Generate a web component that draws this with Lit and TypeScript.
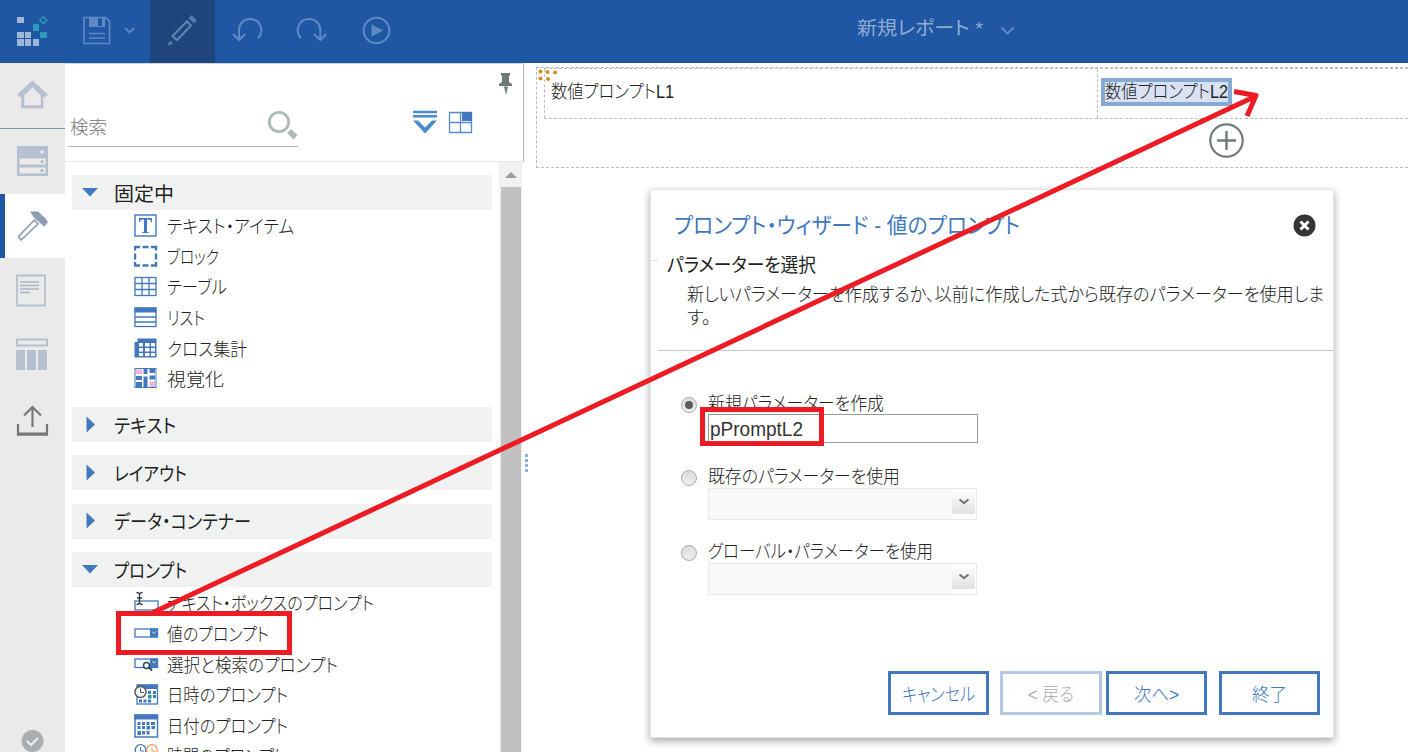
import { LitElement, html, css, svg, nothing } from "lit";
import { customElement, property } from "lit/decorators.js";

/** A single line of text condensed or expanded to fill a given width. */
@customElement("fit-text")
class FitText extends LitElement {
  @property() text = "";
  @property({ type: Number }) w = 100;
  static styles = css`
    :host { display: block; flex: none; white-space: pre; }
    .run { display: inline-block; transform-origin: 0 50%; }
  `;
  firstUpdated() {
    const run = this.renderRoot.querySelector(".run") as HTMLElement;
    this.style.width = `${this.w}px`;
    run.style.transform = `scaleX(${this.w / run.getBoundingClientRect().width})`;
  }
  render() {
    return html`<span class="run">${this.text}</span>`;
  }
}

const B = "#4178be";

const itemIcons: Record<string, unknown> = {
  text: svg`<rect x="1" y="1" width="21" height="21" fill="#fff" stroke=${B} stroke-width="1.4"/><path d="M5 4h13v4h-1c0-2-1-2.600-3-2.600h-1v11.600c0 1 .6 1.200 2 1.300v.7H8v-.7c1.400-.1 2-.3 2-1.300V5.400H9C7 5.400 6 6 6 8H5z" fill=${B}/>`,
  block: svg`<path d="M1 6V2.500h5M8.500 2.500h6M17 2.500h5V6M22 9v6M22 17.500V21h-5M14.500 21h-6M6 21H1v-3.500M1 15V9" transform="translate(0 -.5)" fill="none" stroke=${B} stroke-width="2.400"/>`,
  table: svg`<rect x="1" y="2.500" width="21" height="18" fill="none" stroke=${B} stroke-width="1.300"/><path d="M8 2v19M15 2v19M1 8.500h21M1 14.500h21" stroke=${B} stroke-width="1.300"/>`,
  list: svg`<rect x="1" y="2" width="21" height="18.500" fill="none" stroke=${B} stroke-width="1.300"/><path d="M.5 1.500h22v5H.5z" fill=${B}/><path d="M1 11h21M1 16h21" stroke=${B} stroke-width="1.300"/>`,
  cross: svg`<path d="M3.500 1.500h19V20.500H.5V5h3z" fill=${B}/><path d="M5 6h4v3.500H5zM11 6h4.500v3.500H11zM17 6h4v3.500h-4zM5 11h4v3.500H5zM11 11h4.500v3.500H11zM17 11h4v3.500h-4zM5 16h4v3H5zM11 16h4.500v3H11zM17 16h4v3h-4z" fill="#fff"/>`,
  visual: svg`<rect x="1" y="1.500" width="21" height="19" fill="#fff" stroke=${B}/><path d="M2 9h6v4H2zM2 15h6v5H2zM9.500 2h4v5h-4zM9.500 9.500h4V20h-4zM15.500 2H21v4h-5.500zM15.500 8.500H21v4h-5.500z" fill=${B}/><path d="M2 2.500h6v4.500H2zM15.500 14.500H21V20h-5.500z" fill="#eeb4d6"/>`,
  textbox: svg`<rect x="1" y="10" width="23" height="9" fill="#fff" stroke=${B} stroke-width="1.300"/><path d="M2.500 1.500c1.500 0 2.500.5 3 1.500.5-1 1.500-1.500 3-1.500M5.500 3v9M3 7h5M2.500 13.500c1.500 0 2.500-.5 3-1.500.5 1 1.500 1.500 3 1.500" fill="none" stroke="#333" stroke-width="1.300"/>`,
  value: svg`<rect x="1" y="7" width="22.500" height="8" fill="#fff" stroke=${B} stroke-width="1.300"/><path d="M16 6.500h8v9h-8z" fill=${B}/><path d="m18 9.500 2 2 2-2" fill="none" stroke="#cfe0f5"/>`,
  search: svg`<rect x="1" y="6" width="22.500" height="8.500" fill="#fff" stroke=${B} stroke-width="1.300"/><path d="M16 5.500h8v9h-8z" fill=${B}/><path d="m18 8 2 2 2-2" fill="none" stroke="#cfe0f5"/><circle cx="12.500" cy="12.500" r="3" fill="#fff" stroke="#264a60" stroke-width="1.500"/><path d="m15 14.500 3 3" stroke="#264a60" stroke-width="2"/>`,
  datetime: svg`<rect x="3" y="2" width="20.500" height="19" fill="#fff" stroke=${B} stroke-width="1.300"/><path d="M3 1.500h21V6H3z" fill=${B}/><path d="M14 8h3v3h-3zM19 8h3v3h-3zM19 12h3v3h-3zM5 16.500h3v3H5zM9.500 16.500h3v3h-3zM14 16.500h3v3h-3z" fill=${B}/><path d="M14 12h3.500v3.500H14z" fill="#12a58c"/><circle cx="6.500" cy="9" r="5.500" fill="#f4f4f4" stroke="#555" stroke-width="1.400"/><path d="M6.500 5.500V9.500H10" fill="none" stroke="#555"/>`,
  date: svg`<rect x="1" y="1" width="22.500" height="22" fill="#fff" stroke=${B} stroke-width="1.500"/><path d="M.5.500h23.500v5H.5z" fill=${B}/><path d="M8 8h3v3H8zM12.500 8h3v3h-3zM17 8h4v3h-4zM3.500 12h3v3h-3zM8 12h3v3H8zM12.500 12h3.500v3.500h-3.500zM17.500 12H21v3h-3.500zM3.500 17H7v4H3.500zM8 17h3v3.500H8zM12.500 17h3v3.500h-3z" fill=${B}/><path d="M3.500 8h3v3h-3z" fill=${B}/>`,
  time: svg`<circle cx="6.500" cy="6" r="5.300" fill="#fff" stroke=${B} stroke-width="1.300"/><path d="M6.500 3v4H10" fill="none" stroke=${B}/><circle cx="18" cy="6" r="5.300" fill="#fff" stroke="#ee9560" stroke-width="1.300"/><path d="M18 3v4h3.500" fill="none" stroke="#ee9560"/>`,
};

type Item = [icon: string, label: string, width: number];
const pinned: Item[] = [
  ["text", "テキスト・アイテム", 127],
  ["block", "ブロック", 52],
  ["table", "テーブル", 60],
  ["list", "リスト", 38],
  ["cross", "クロス集計", 80],
  ["visual", "視覚化", 57],
];
const prompts: Item[] = [
  ["textbox", "テキスト・ボックスのプロンプト", 207],
  ["value", "値のプロンプト", 102],
  ["search", "選択と検索のプロンプト", 171],
  ["datetime", "日時のプロンプト", 121],
  ["date", "日付のプロンプト", 121],
  ["time", "時間のプロンプト", 119],
];

@customElement("app-root")
class AppRoot extends LitElement {
  static styles = css`
    :host {
      display: block; position: relative; width: 1408px; height: 752px; overflow: hidden; background: #fff;
      font-family: "Liberation Sans", "Noto Sans CJK JP", sans-serif;
      font-size: 18.5px; font-weight: 300; line-height: 24px; color: #222;
      font-feature-settings: "palt";
    }
    * { box-sizing: border-box; }
    svg { display: block; flex: none; }
    .top { height: 63px; background: #1f57a4; display: flex; }
    .tools { width: 857px; flex: none; }
    .report { display: flex; align-items: center; gap: 17px; color: #8fabd1; font-size: 19px; font-weight: 400; padding-bottom: 5px; }
    .report svg { margin-top: 4px; }
    .main { display: flex; height: 689px; }
    .rail { width: 65px; flex: none; background: #eaeaea; display: flex; flex-direction: column; }
    .tab { height: 65px; flex: none; }
    .tab.home { height: 66px; border-bottom: 1px solid #8195b4; }
    .tab.on { height: 64px; background: #fff; border-left: 5px solid #1f57a4; }
    .tab.last { margin-top: auto; height: 32px; }
    .panel { width: 459px; flex: none; display: flex; flex-direction: column; border-top: 1px solid #d0d6de; }
    .head { height: 98px; flex: none; border-right: 1px solid #aeb8b8; border-bottom: 1px solid #e3e6e6; display: flex; align-items: flex-start; }
    .find { width: 230px; margin: 43px 0 0 3px; height: 40px; border-bottom: 1px solid #aeb8b8; display: flex; justify-content: space-between; padding: 1px 0 0 2px; color: #777; }
    .find fit-text { margin-top: 8px; }
    .find svg { margin-right: -1px; }
    .modes { margin: 46px 0 0 115px; }
    .pin { margin: 8px 0 0 23px; }
    .scroll { display: flex; flex: 1; min-height: 0; overflow: hidden; }
    .tree { width: 427px; margin-left: 7px; padding-top: 13px; flex: none; }
    .sec { width: 420px; height: 35px; background: #f0f2f1; display: flex; align-items: center; color: #222; font-weight: 400; font-size: 19px; margin-bottom: 13.400px; }
    .sec.open { margin-bottom: 0; }
    .sec svg { margin: 0 13px 0 9px; }
    .sec fit-text { padding-top: 4px; }
    .items { height: 197px; padding-top: 1px; }
    .item { height: 30.600px; display: flex; align-items: center; padding-left: 62px; gap: 8px; }
    .item fit-text { padding-top: 2px; }
    .bar { width: 23px; background: #f1f1f1; display: flex; flex-direction: column; align-items: center; }
    .bar svg { margin-top: 10px; }
    .thumb { width: 20px; flex: 1; margin-top: 9px; background: #c1c1c1; }
    .canvas { flex: 1; min-width: 0; padding: 4px 0 0 12px; }
    .page { height: 101px; border: 1px dashed #bbb; border-right: 0; }
    .grid { height: 51px; border-bottom: 1px dashed #bbb; border-top: 1px dashed #bbb; margin-left: 7px; display: flex; }
    .cell { width: 553px; border-left: 1px dashed #bbb; padding: 11px 0 0 6px; }
    .cell.b { flex: 1; padding: 9px 0 0 3px; }
    .picked { width: 131px; height: 28px; border: 4px solid #86a9d5; background: #d8e2f2; display: flex; align-items: center; justify-content: center; }
    .dialog { position: absolute; left: 650px; top: 189px; width: 684px; height: 549px; background: #fff; border: 1px solid #e5e5e5; box-shadow: 0 3px 8px rgba(0,0,0,.35); }
    .dhead { display: flex; justify-content: space-between; padding: 24px 17px 0 23px; height: 64px; color: #4178be; font-size: 22px; font-weight: 400; }
    .intro { height: 97px; margin-left: 7px; border-bottom: 1px solid #c8c8c8; padding-left: 9px; }
    .sub { font-weight: 400; font-size: 19px; height: 29px; }
    .body { padding-left: 20px; line-height: 23px; }
    .form { padding: 40px 0 0 30px; height: 320px; }
    .opt { display: flex; align-items: flex-start; gap: 11px; height: 75px; }
    .opt:first-child { height: 73px; }
    .opt > div > fit-text { padding-top: 1px; height: 24px; }
    .radio { width: 16px; height: 16px; margin-top: 6px; flex: none; border: 1px solid #aaa; border-radius: 50%; background: linear-gradient(#ddd, #eee); display: flex; align-items: center; justify-content: center; }
    .dot { width: 8px; height: 8px; border-radius: 50%; background: #5a5a5a; }
    .input { width: 270px; height: 29px; margin-top: -1px; border: 1px solid #999; background: #fff; display: flex; align-items: center; padding: 0 0 0 1px; font-size: 20px; color: #333; }
    .select { width: 269px; height: 32px; border: 1px solid #e8e8e8; background: #f8f8f8; display: flex; justify-content: flex-end; }
    .drop { width: 24px; background: #fff; padding: 1px 1px 5px 0; }
    .arrow { height: 24px; background: linear-gradient(#fff, #e0e0e0); display: flex; justify-content: center; padding-top: 8px; }
    .foot { display: flex; padding-left: 237px; }
    .btn { width: 101px; height: 44px; border: 3px solid #4178be; color: #4178be; display: flex; align-items: center; justify-content: center; padding-top: 4px; }
    .btn.off { width: 102px; border-color: #b3c8e6; color: #aaa; margin: 0 4px 0 11px; }
    .btn.end { margin-left: 12px; }
    .over { position: absolute; left: 0; top: 0; }
  `;

  section(label: string, w: number, open = false) {
    return html`<div class="sec ${open ? "open" : ""}">
      <svg width="20" height="20" viewBox="0 0 20 20"><path d=${open ? "M1 5h16l-8 8.500z" : "M5.500 1.500v16l8.500-8z"} fill=${B}/></svg>
      <fit-text .text=${label} .w=${w}></fit-text>
    </div>`;
  }

  item([icon, label, w]: Item) {
    return html`<div class="item">
      <svg width="25" height="24" viewBox="0 0 25 24">${itemIcons[icon]}</svg>
      <fit-text .text=${label} .w=${w}></fit-text>
    </div>`;
  }

  option(label: string, w: number, value?: string) {
    return html`<div class="opt">
      <div class="radio">${value ? html`<div class="dot"></div>` : nothing}</div>
      <div>
        <fit-text .text=${label} .w=${w}></fit-text>
        ${value
          ? html`<div class="input"><fit-text .text=${value} .w=${93}></fit-text></div>`
          : html`<div class="select"><div class="drop"><div class="arrow">
              <svg width="12" height="8" viewBox="0 0 12 8"><path d="m1.500 1.500 4.500 3.500 4.500-3.500" fill="none" stroke="#777" stroke-width="2.200"/></svg>
            </div></div></div>`}
      </div>
    </div>`;
  }

  render() {
    return html`
      <div class="top">
        <svg class="tools" width="857" height="63" viewBox="0 0 857 63">
          <path d="M150 0h65v63h-65z" fill="#1e467c"/>
          <path d="M17 17h7v6h-7zM17 32h7v6h-7zM25 32h6v6h-6zM17 39h7v7h-7zM25 39h6v7h-6zM33 39h6v7h-6z" fill="#9fb6d8"/>
          <path d="M33 24h6v7h-6zM40 32h7v6h-7z" fill="#2f9bbb"/>
          <path d="m43.300 16.700 3.500 3.500-3.500 3.500-3.500-3.500z" fill="none" stroke="#2f9bbb" stroke-width="1.400"/>
          <g fill="none" stroke="#5f89c4" stroke-width="1.600">
            <path d="M84 17.500h21.500l4 4V43.500H84zM89 33.500h16M89 38h16"/>
            <path d="m125 28 4.500 4.500 4.500-4.500" stroke-width="1.800"/>
            <path d="M239 40V30C239 24 243.500 19 249.500 19C260 19 265 30 258 38.500" stroke-width="2"/>
            <path d="m233 34 6 6 6-6" stroke-width="2"/>
            <path d="M301 38.500C294 30 299 19 309.500 19C315.500 19 320.300 24 320.300 30V40" stroke-width="2"/>
            <path d="m314 34 6.300 6 6-6" stroke-width="2"/>
            <circle cx="376.500" cy="30.500" r="12.800" stroke-width="2"/>
          </g>
          <path d="M89 18h9v9h-9zM102 18h3v9H89v-1h13zM371.500 24.500v12l12-6z" fill="#5f89c4"/>
          <path d="m188.500 18 3-3 5.500 5.500-3 3z" fill="#5578a9"/>
          <path d="M172.500 36 187 21.500l4 4L177 40z" fill="none" stroke="#6484b2" stroke-width="2"/>
          <path d="m167 46 3-5.500 3.500 3z" fill="#5578a9"/>
        </svg>
        <div class="report">
          <fit-text .text=${"新規レポート *"} .w=${126}></fit-text>
          <svg width="16" height="10" viewBox="0 0 16 10"><path d="m1.500 1.500 6 6 6-6" fill="none" stroke="#5f89c4" stroke-width="2"/></svg>
        </div>
      </div>
      <div class="main">
        <div class="rail">
          <svg class="tab home" width="65" height="66" viewBox="0 0 65 66"><path d="M32.500 17.500 48 32l-3 3-1.500-1.500V46H21V33.500L19.500 35 17 32zm0 7L24 33v10h17V33z" fill="#b6c0ce"/></svg>
          <svg class="tab" width="65" height="65" viewBox="0 0 65 65"><path d="M17 17h31v30H17z" fill="#b6c0ce"/><path d="M19.500 29.500h26v6h-26zM19.500 38.500h26v6h-26z" fill="#ebebeb"/><circle cx="42" cy="23" r="1.800" fill="#eee"/><circle cx="42" cy="32.500" r="1.600" fill="#aab5c4"/><circle cx="42" cy="41.500" r="1.600" fill="#aab5c4"/></svg>
          <div class="tab on"><svg width="60" height="64" viewBox="0 0 60 64"><path d="M25 17.500h8l7.500 7 2.500 3.500-1.500 2-2.500 2.500-10-9z" fill="#8c9db2"/><path d="M13.500 42.500 29.500 26l3.500 4L16 46z" fill="none" stroke="#8c9db2" stroke-width="1.700"/></svg></div>
          <svg class="tab" width="65" height="65" viewBox="0 0 65 65"><path d="M17 17.500h28v30H17z" fill="none" stroke="#b6c0ce" stroke-width="1.800"/><path d="M20 24h19M20 27.500h19M20 31h19M20 34.500h10" stroke="#a9b5c6" stroke-width="1.500"/></svg>
          <svg class="tab" width="65" height="65" viewBox="0 1 65 65"><path d="M17 17.500h30v6H17z" fill="none" stroke="#b6c0ce" stroke-width="2"/><path d="M16 28h9v20h-9zM27 28h9v20h-9zM38 28h9v20h-9z" fill="#b6c0ce"/></svg>
          <svg class="tab" width="65" height="65" viewBox="0 0 65 65"><path d="M18 36v10.500h29V36M32.500 39V19M24 27.500l8.500-8.500 8.500 8.500" fill="none" stroke="#777" stroke-width="2.200"/><path d="M17 44.500h31v3H17z" fill="#777"/></svg>
          <svg class="tab last" width="65" height="32" viewBox="0 0 65 32"><circle cx="32.500" cy="21" r="11" fill="#aaaeb2"/><path d="m27 21 4 4 7-7" fill="none" stroke="#eee" stroke-width="2.200"/></svg>
        </div>
        <div class="panel">
          <div class="head">
            <div class="find"><fit-text .text=${"検索"} .w=${37}></fit-text>
              <svg width="32" height="36" viewBox="0 0 32 36"><circle cx="12" cy="14" r="9.700" fill="none" stroke="#aeb9b9" stroke-width="2.800"/><path d="m20 25 4-4 6.500 6-4 4.500z" fill="#aeb9b9"/></svg>
            </div>
            <svg class="modes" width="62" height="26" viewBox="0 0 62 26">
              <path d="M0 2h24M0 6.200h24" stroke="#4a8ccb" stroke-width="2.400"/><path d="M0 10.500h5l7 7 7-7h5L12 23.500z" fill="#4a8ccb"/>
              <path d="M36.500 2.500h22v20h-22zM47.500 2v21M36 12.500h23" fill="none" stroke="#5a8aca" stroke-width="1.300"/><path d="M49 2h10v9H49z" fill=${B}/>
            </svg>
            <svg class="pin" width="16" height="24" viewBox="0 0 16 24"><path d="M3 1h9v2l-1 1v6l3 2v2H1v-2l3-2V4L3 3zM6 14.500h4L8 23z" fill="#6e7b7b"/></svg>
          </div>
          <div class="scroll">
            <div class="tree">
              ${this.section("固定中", 60, true)}
              <div class="items">${pinned.map((i) => this.item(i))}</div>
              ${this.section("テキスト", 62)} ${this.section("レイアウト", 73)}
              ${this.section("データ・コンテナー", 137)} ${this.section("プロンプト", 73, true)}
              <div class="items">${prompts.map((i) => this.item(i))}</div>
            </div>
            <div class="bar"><svg width="12" height="6" viewBox="0 0 12 6"><path d="m0 6 6-6 6 6z" fill="#9a9a9a"/></svg><div class="thumb"></div></div>
          </div>
        </div>
        <div class="canvas">
          <div class="page"><div class="grid">
            <div class="cell"><fit-text .text=${"数値プロンプトL1"} .w=${123}></fit-text></div>
            <div class="cell b"><div class="picked"><fit-text .text=${"数値プロンプトL2"} .w=${123}></fit-text></div></div>
          </div></div>
        </div>
      </div>
      <div class="dialog">
        <div class="dhead"><fit-text .text=${"プロンプト・ウィザード - 値のプロンプト"} .w=${346}></fit-text>
          <svg width="23" height="23" viewBox="0 0 23 23"><circle cx="11.500" cy="11.500" r="11" fill="#353535"/><path d="m7.500 7.500 8 8m0-8-8 8" stroke="#fff" stroke-width="3"/></svg>
        </div>
        <div class="intro">
          <div class="sub"><fit-text .text=${"パラメーターを選択"} .w=${149}></fit-text></div>
          <div class="body"><fit-text .text=${"新しいパラメーターを作成するか、以前に作成した式から既存のパラメーターを使用しま"} .w=${637}></fit-text>
          <fit-text .text=${"す。"} .w=${24}></fit-text></div>
        </div>
        <div class="form">
          ${this.option("新規パラメーターを作成", 176, "pPromptL2")}
          ${this.option("既存のパラメーターを使用", 192)}
          ${this.option("グローバル・パラメーターを使用", 225)}
        </div>
        <div class="foot">
          <div class="btn"><fit-text .text=${"キャンセル"} .w=${73}></fit-text></div>
          <div class="btn off"><fit-text .text=${"< 戻る"} .w=${46}></fit-text></div>
          <div class="btn"><fit-text .text=${"次へ>"} .w=${45}></fit-text></div>
          <div class="btn end"><fit-text .text=${"終了"} .w=${35}></fit-text></div>
        </div>
      </div>
      <svg class="over" width="1408" height="752" viewBox="0 0 1408 752">
        <path d="M525 454h3v3h-3zM525 459h3v3h-3zM525 464h3v3h-3zM525 469h3v3h-3z" fill="#8fb0e0"/>
        <path d="M651 260.500h7" stroke="#e5e5e5"/>
        <g fill="#d58a1c"><circle cx="540.500" cy="71.500" r="2"/><circle cx="547.500" cy="72" r="2"/><circle cx="555" cy="72.500" r="2"/><circle cx="540.500" cy="78.500" r="2"/><circle cx="548" cy="79" r="2"/></g>
        <circle cx="1226.500" cy="140.500" r="16.200" fill="#fff" stroke="#6e7b7b" stroke-width="2.200"/>
        <path d="M1217 140.500h19M1226.500 131v19" stroke="#6e7b7b" stroke-width="2.400"/>
        <g fill="none" stroke="#ed1c24" stroke-width="5">
          <path d="M118.500 613.500h171v39h-171zM702.500 409.500h119v34h-119z"/>
          <path d="M152 613 1256 96"/><path d="m1234 91.500 22 4-9 20.500" stroke-linejoin="round"/>
        </g>
      </svg>
    `;
  }
}
